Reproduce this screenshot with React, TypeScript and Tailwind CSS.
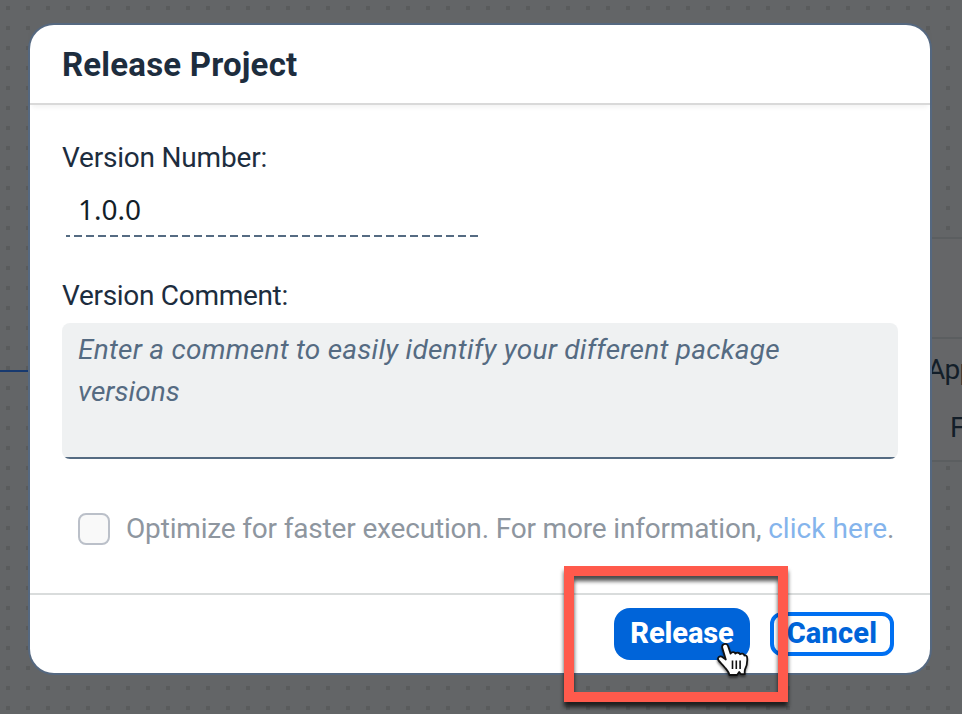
import React from 'react';

function Canvas() {
  return (
    <div className="absolute inset-0 bg-[#636567] bg-[conic-gradient(from_0deg_at_4px_4px,#636567_270deg,#595b5c_0)] bg-[length:20px_20px] bg-[position:6px_6px]">
      <div className="absolute left-0 top-[370px] h-[2px] w-[28px] bg-[#17396f]" />
      <div className="absolute left-[900px] top-[237px] h-[225px] w-[80px] border-y-2 border-[#5b5e60] bg-[#656668] text-[28px] leading-[34px] text-[#131e29]">
        <div className="h-[100px] border-b-2 border-[#5b5e60]" />
        <div className="pl-[27px] pt-[14px] tracking-[-0.8px]">App</div>
        <div className="pl-[50px] pt-[24px]">F</div>
      </div>
    </div>
  );
}

function HandCursor() {
  return (
    <svg className="absolute left-[102px] top-[34px] drop-shadow-[0_2px_1px_rgba(0,0,0,0.5)]" width="34" height="36" viewBox="0 0 34 36">
      <path
        d="M8 2.200C10 1.400 11.600 2.400 12.200 4.400L14.600 11.600C15.800 9.600 18.600 9.800 19.400 11.600C20.800 10.200 23.200 10.500 24 12.200C25.600 11 28 11.600 28.400 13.500C30 13 31.200 14.200 31.200 16.200C31.500 20.500 30.800 24 29 27.500C28.600 29 28.600 30.500 28.800 32.200H25L23.200 30L21 33H13.400C12.800 30 10.500 27.500 8.800 25.500C6.600 22.500 4.500 21 2.500 18.400C1 16 3.200 13.700 5.600 14.600L9.800 17.600L6.400 6.200C5.800 4.400 6.300 2.800 8 2.200Z"
        fill="#fff"
        stroke="#111"
        strokeWidth="1.8"
        strokeLinejoin="round"
      />
      <path d="M16.500 18.500v8.500M20.300 18.500v8.500M24.100 18.500v8.500" stroke="#111" strokeWidth="1.600" />
    </svg>
  );
}

export default function App() {
  return (
    <div className="relative h-[714px] w-[962px] overflow-hidden px-[30px] pt-[25px] font-['Roboto','Noto_Sans',sans-serif]">
      <Canvas />
      <div className="relative flex h-[648px] w-[900px] flex-col rounded-[24px] bg-white text-[28px] text-[#1d2d3e] shadow-[0_0_0_2px_#556880]">
        <header className="flex h-[80px] items-center border-b-2 border-[#d9d9d9] px-8 pt-[1px] shadow-[0_4px_5px_-2px_rgba(0,0,0,0.06)]">
          <h1 className="whitespace-nowrap text-[33px] font-bold tracking-[0.2px]">Release Project</h1>
        </header>
        <main className="flex h-[488px] flex-col px-8 pt-[34px]">
          <label className="h-[38px] whitespace-nowrap leading-[38px] tracking-[-0.2px]">Version Number:</label>
          <div className="mt-[9px] h-[52px] w-[420px] whitespace-nowrap pl-4 font-['Noto_Sans',sans-serif] text-[#131e29]">
            <div className="h-[49px] leading-[46px]">1.0.0</div>
            <div className="-ml-3 h-[2px] w-[412px] bg-[repeating-linear-gradient(90deg,#556b82_0_8px,transparent_8px_12px)] bg-[position:-4px_0]" />
          </div>
          <label className="mt-[39px] h-[38px] whitespace-nowrap leading-[38px] tracking-[-0.3px]">Version Comment:</label>
          <div className="mt-[8px] h-[136px] w-[836px] rounded-[8px] bg-[linear-gradient(#eff1f2_134px,#556b82_134px)] px-4 pt-[6px] italic leading-[42px] text-[#556b82]">
            <div className="whitespace-nowrap tracking-[0.25px]">Enter a comment to easily identify your different package</div>
            <div>versions</div>
          </div>
          <div className="mt-[51px] flex h-[38px] items-center whitespace-nowrap pl-4 text-[#8e969f]">
            <div className="mr-4 size-8 shrink-0 rounded-[8px] border-2 border-[#bbc0c9] bg-[#f9f9f9]" />
            <span className="tracking-[-0.17px]">Optimize for faster execution. For more information, <a className="tracking-[0.05px] text-[#84b4ec]">click here</a>.</span>
          </div>
        </main>
        <footer className="flex h-[80px] items-center justify-end gap-5 border-t-2 border-[#d9dcdc] pr-9 text-[29px] font-extrabold">
          <button className="relative flex h-[52px] w-[136px] items-center justify-center rounded-[16px] bg-[#0064d9] text-white">
            <span className="tracking-[-0.1px]">Release</span>
            <HandCursor />
          </button>
          <button className="flex h-[44px] w-[124px] items-center justify-center rounded-[12px] border-4 border-[#0070f2] text-[#0064d9]">
            <span className="tracking-[0.2px]">Cancel</span>
          </button>
        </footer>
      </div>
      <div className="absolute left-[564px] top-[566px] h-[136px] w-[224px] border-[10px] border-[#ff5a4c] drop-shadow-[0_5px_2px_rgba(0,0,0,0.7)]" />
    </div>
  );
}
